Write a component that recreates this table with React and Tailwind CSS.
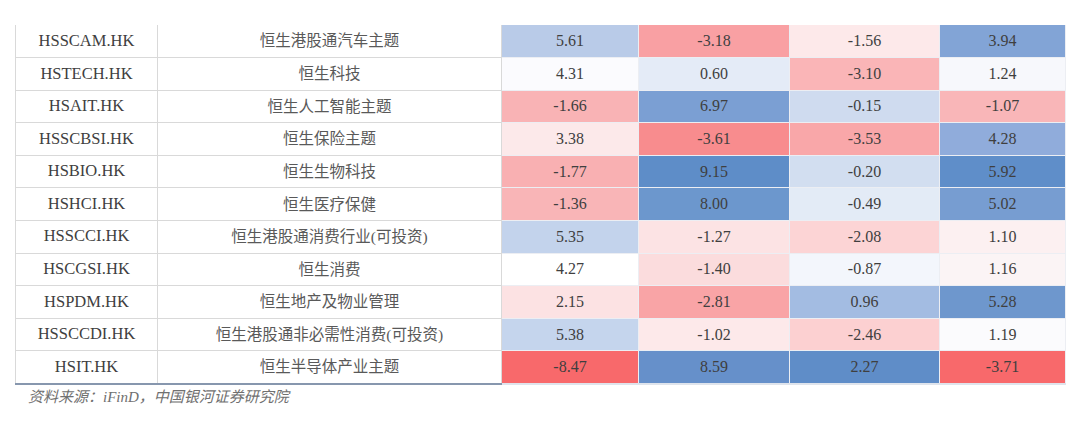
const rows = [
  { code: 'HSSCAM.HK', name: '恒生港股通汽车主题', cells: [['5.61', 'bg-[#b9cbe8]'], ['-3.18', 'bg-[#f9a0a3]'], ['-1.56', 'bg-[#fde9ea]'], ['3.94', 'bg-[#82a4d6]']] },
  { code: 'HSTECH.HK', name: '恒生科技', cells: [['4.31', 'bg-[#fbfbfe]'], ['0.60', 'bg-[#e4ebf7]'], ['-3.10', 'bg-[#fab5b7]'], ['1.24', 'bg-[#f7f8fc]']] },
  { code: 'HSAIT.HK', name: '恒生人工智能主题', cells: [['-1.66', 'bg-[#f9b3b5]'], ['6.97', 'bg-[#7b9fd3]'], ['-0.15', 'bg-[#cfdbef]'], ['-1.07', 'bg-[#f9b6b8]']] },
  { code: 'HSSCBSI.HK', name: '恒生保险主题', cells: [['3.38', 'bg-[#fce9ea]'], ['-3.61', 'bg-[#f88c8e]'], ['-3.53', 'bg-[#f9a7a9]'], ['4.28', 'bg-[#90acdb]']] },
  { code: 'HSBIO.HK', name: '恒生生物科技', cells: [['-1.77', 'bg-[#f9b0b2]'], ['9.15', 'bg-[#5e8dc8]'], ['-0.20', 'bg-[#d2def0]'], ['5.92', 'bg-[#5f8ec9]']] },
  { code: 'HSHCI.HK', name: '恒生医疗保健', cells: [['-1.36', 'bg-[#f9b5b7]'], ['8.00', 'bg-[#6c97cd]'], ['-0.49', 'bg-[#e3ebf6]'], ['5.02', 'bg-[#779dd1]']] },
  { code: 'HSSCCI.HK', name: '恒生港股通消费行业(可投资)', cells: [['5.35', 'bg-[#c3d3ec]'], ['-1.27', 'bg-[#fce3e4]'], ['-2.08', 'bg-[#fcd4d5]'], ['1.10', 'bg-[#fcf0f1]']] },
  { code: 'HSCGSI.HK', name: '恒生消费', cells: [['4.27', 'bg-[#ffffff]'], ['-1.40', 'bg-[#fbdcdd]'], ['-0.87', 'bg-[#f3f6fc]'], ['1.16', 'bg-[#fbf4f5]']] },
  { code: 'HSPDM.HK', name: '恒生地产及物业管理', cells: [['2.15', 'bg-[#fce2e3]'], ['-2.81', 'bg-[#f9a4a6]'], ['0.96', 'bg-[#a3bce2]'], ['5.28', 'bg-[#6e97cd]']] },
  { code: 'HSSCCDI.HK', name: '恒生港股通非必需性消费(可投资)', cells: [['5.38', 'bg-[#c5d5ed]'], ['-1.02', 'bg-[#fde9ea]'], ['-2.46', 'bg-[#fcd0d1]'], ['1.19', 'bg-[#fbfbfd]']] },
  { code: 'HSIT.HK', name: '恒生半导体产业主题', cells: [['-8.47', 'bg-[#f8696b]'], ['8.59', 'bg-[#6690ca]'], ['2.27', 'bg-[#5f8dc8]'], ['-3.71', 'bg-[#f8696b]']] },
];

export default function App() {
  return (
    <div className="min-h-screen bg-white pt-[25px] pl-[15px] font-['Liberation_Serif','Noto_Sans_CJK_SC',serif]">
      <table className="table-fixed border-collapse w-[1050px] text-[#3f3f3f]">
        <colgroup>
          <col className="w-[142px]" />
          <col className="w-[344px]" />
          <col className="w-[137px]" />
          <col className="w-[151px]" />
          <col className="w-[150px]" />
          <col className="w-[126px]" />
        </colgroup>
        <tbody>
          {rows.map((r, i) => {
            const last = i === rows.length - 1;
            return (
              <tr key={r.code} className="h-[32.6px]">
                <td
                  className={`border-l border-r border-[#d9d9d9] text-center text-[16.5px] font-['Liberation_Serif',serif] ${
                    last ? 'border-b-2 border-b-[#8797ae]' : 'border-b'
                  }`}
                >
                  {r.code}
                </td>
                <td
                  className={`border-r border-[#d9d9d9] text-center text-[15.5px] text-[#595959] ${
                    last ? 'border-b-2 border-b-[#8797ae]' : 'border-b'
                  }`}
                >
                  {r.name}
                </td>
                {r.cells.map(([v, bg], j) => (
                  <td
                    key={j}
                    className={`${bg} border-b border-r border-[#eceef3] text-center text-[16px] font-['Liberation_Serif',serif] ${
                      last ? 'border-b-2 border-b-[#dfe4ec]' : ''
                    }`}
                  >
                    {v}
                  </td>
                ))}
              </tr>
            );
          })}
        </tbody>
      </table>
      <p className="mt-[1px] pl-[13px] text-[15px] italic text-[#707070]">资料来源：iFinD，中国银河证券研究院</p>
    </div>
  );
}
